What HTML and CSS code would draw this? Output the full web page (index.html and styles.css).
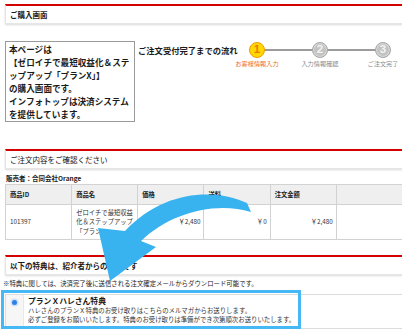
FILE: index.html
```html
<!DOCTYPE html>
<html lang="ja">
<head>
    <meta charset="UTF-8">
    <meta name="viewport" content="width=device-width, initial-scale=1.0">
    <title>ご購入画面</title>
    <link rel="stylesheet" href="styles.css">
</head>
<body>
    <div class="page">
        <div class="sec-head">ご購入画面</div>

        <div class="intro">
            <div class="info-box">本ページは<br>【ゼロイチで最短収益化＆ステ<br>ップアップ「プランX」】<br>の購入画面です。<br>インフォトップは決済システム<br>を提供しています。</div>
            <div class="flow">
                <div class="flow-title">ご注文受付完了までの流れ</div>
                <div class="steps">
                    <div class="step current">
                        <span class="num">1</span>
                        <span class="label">お客様情報入力</span>
                    </div>
                    <div class="step">
                        <span class="num">2</span>
                        <span class="label">入力情報確認</span>
                    </div>
                    <div class="step">
                        <span class="num">3</span>
                        <span class="label">ご注文完了</span>
                    </div>
                </div>
            </div>
        </div>

        <div class="sec-head sec-order">ご注文内容をご確認ください</div>
        <p class="seller">販売者：合同会社Orange</p>
        <table class="order">
            <tr>
                <th>商品ID</th>
                <th>商品名</th>
                <th>価格</th>
                <th>送料</th>
                <th>注文金額</th>
                <th></th>
            </tr>
            <tr>
                <td>101397</td>
                <td class="name">ゼロイチで最短収益化＆ステップアップ「プランX」</td>
                <td class="price">￥2,480</td>
                <td class="price">￥0</td>
                <td class="price">￥2,480</td>
                <td></td>
            </tr>
        </table>

        <div class="sec-head sec-bonus">以下の特典は、紹介者からの特典です</div>
        <p class="note">※特典に関しては、決済完了後に送信される注文確定メールからダウンロード可能です。</p>
        <div class="bonus">
            <div class="bonus-radio"><span class="radio"></span></div>
            <div class="bonus-body">
                <div class="bonus-title">プランＸハレさん特典</div>
                <p>ハレさんのプランＸ特典のお受け取りはこちらのメルマガからお送りします。<br>必ずご登録をお願いいたします。特典のお受け取りは準備ができ次第順次お送りいたします。</p>
            </div>
            <div class="highlight"></div>
        </div>
    </div>

    <!-- big pointer arrow drawn over the page -->
    <svg class="arrow" width="402" height="331" viewBox="0 0 402 331">
        <path d="M247 203 C215 188 163 190 125 231 L98 228 L110 281 L156 247 L141 241 C170 213 215 201 251 212 Z" fill="#38b3f0"/>
    </svg>
</body>
</html>
```

FILE: styles.css
```css
html, body {
    margin: 0;
    padding: 0;
    overflow: hidden;
}
body {
    font-family: "Noto Sans CJK JP", "Noto Sans", sans-serif;
    color: #1a1a1a;
    background: #fff;
}
p {
    margin: 0;
}
.page {
    position: relative;
    width: 398px;
    padding: 4px 0 0 5px;
}
.sec-head {
    height: 17px;
    line-height: 17px;
    padding-left: 4px;
    font-size: 7.5px;
    font-weight: bold;
    background: #fff;
    border: 1px solid #e6e6e6;
    border-top: 2px solid #d40000;
    box-shadow: 0 1px 2px rgba(0, 0, 0, 0.15);
}
.sec-order {
    margin-top: 27px;
    font-weight: normal;
    color: #111;
}
.sec-bonus {
    margin-top: 15px;
}

/* intro box + order flow */
.intro {
    display: flex;
    margin-top: 17px;
}
.info-box {
    width: 133px;
    box-sizing: border-box;
    padding: 1px 3px 0;
    border: 1px solid #9a9a9a;
    font-size: 8.6px;
    line-height: 13px;
    font-weight: bold;
    white-space: nowrap;
}
.flow {
    display: flex;
    margin-left: 3px;
    padding-top: 1px;
}
.flow-title {
    width: 99px;
    font-size: 8.3px;
    line-height: 16px;
    font-weight: bold;
    white-space: nowrap;
}
.steps {
    position: relative;
    display: flex;
    gap: 23px;
}
.steps::before {
    content: "";
    position: absolute;
    top: 7px;
    left: 20px;
    right: 20px;
    height: 2px;
    background: #9c9c9c;
}
.step {
    width: 40px;
    display: flex;
    flex-direction: column;
    align-items: center;
}
.num {
    position: relative;
    width: 16px;
    height: 16px;
    box-sizing: border-box;
    border-radius: 50%;
    border: 1.5px solid #a6a6a6;
    background: #c3c3c3;
    box-shadow: inset 0 0 0 1px #dcdcdc;
    color: #f2f2f2;
    font-size: 11.5px;
    font-weight: bold;
    line-height: 13px;
    text-align: center;
    font-family: "Liberation Sans", sans-serif;
}
.label {
    margin-top: 2px;
    font-size: 6.2px;
    line-height: 8px;
    color: #8a8a8a;
    white-space: nowrap;
}
.current .num {
    background: #ffd800;
    border-color: #f39800;
    box-shadow: none;
    color: #f07800;
}
.current .label {
    color: #f26a1c;
}

/* order table */
.seller {
    margin-top: 5px;
    padding-left: 1px;
    font-size: 6.5px;
    line-height: 9px;
    font-weight: bold;
}
.order {
    margin-top: 1px;
    width: 398px;
    table-layout: fixed;
    border-collapse: collapse;
    font-size: 6.3px;
    color: #333;
}
.order th, .order td {
    border: 1px solid #d2d2d2;
    padding: 0 3px 0 4px;
    text-align: left;
}
.order th {
    height: 19px;
    background: #efefef;
    font-weight: bold;
    color: #222;
}
.order td {
    height: 34px;
    line-height: 9.5px;
    vertical-align: middle;
}
.order .price {
    text-align: right;
}

/* bonus */
.note {
    margin: 4px 0 0 -2px;
    font-size: 6.4px;
    line-height: 9px;
}
.bonus {
    position: relative;
    display: flex;
    margin-top: 6px;
    border: 1px solid #dcdcdc;
    background: #fff;
}
.bonus-radio {
    width: 17px;
    flex-shrink: 0;
    padding-top: 5px;
    display: flex;
    justify-content: center;
    align-items: flex-start;
    background: #f6f6f6;
    border-right: 1px solid #e8e8e8;
}
.radio {
    width: 5px;
    height: 5px;
    border-radius: 50%;
    background: #2f7fe6;
    box-shadow: 0 0 0 1.5px #cfe0f7;
}
.bonus-body {
    padding: 1px 0 4px 4px;
}
.bonus-title {
    font-size: 7.8px;
    line-height: 10px;
    font-weight: bold;
}
.bonus-body p {
    font-size: 6.4px;
    line-height: 9px;
    color: #333;
    white-space: nowrap;
}
.highlight {
    position: absolute;
    left: -5px;
    top: -5px;
    width: 300px;
    height: 39px;
    box-sizing: border-box;
    border: 3px solid #45b8f5;
}

.arrow {
    position: absolute;
    left: 0;
    top: 0;
    pointer-events: none;
}
```
